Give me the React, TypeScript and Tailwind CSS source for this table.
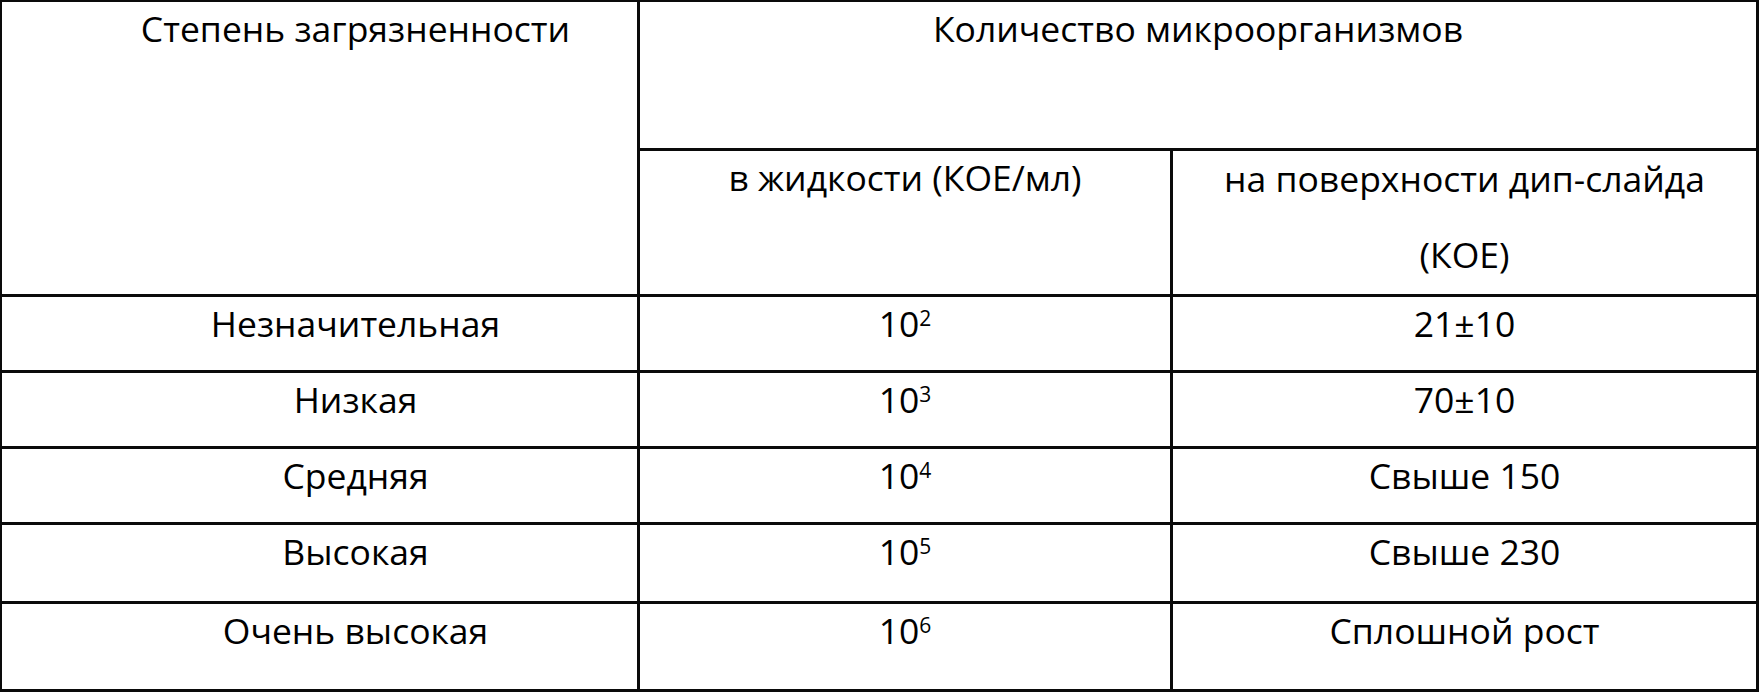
const rows = [
  { level: 'Незначительная', exp: '2', surface: '21±10' },
  { level: 'Низкая', exp: '3', surface: '70±10' },
  { level: 'Средняя', exp: '4', surface: 'Свыше 150' },
  { level: 'Высокая', exp: '5', surface: 'Свыше 230' },
  { level: 'Очень высокая', exp: '6', surface: 'Сплошной рост' },
]

// heights of the body rows, top to bottom
const rowHeights = ['h-[76px]', 'h-[76px]', 'h-[76px]', 'h-[79px]', 'h-[88px]']

const cell = 'border-r-[3px] border-b-[3px] border-[#0a0a0a] text-center leading-[53px]'

export default function App() {
  return (
    <div className="h-[692px] w-[1759px] bg-white font-['Open_Sans','Noto_Sans',sans-serif] text-[35.5px] text-black">
      <div className="grid grid-cols-[638px_533px_586px] grid-rows-[149px_146px] border-l-2 border-t-2 border-[#0a0a0a]">
        <div className={`${cell} row-span-2 pl-[72px]`}>Степень загрязненности</div>
        <div className={`${cell} col-span-2`}>Количество микроорганизмов</div>
        <div className={cell}>в жидкости (КОЕ/мл)</div>
        <div className={`${cell} leading-[76px]`}>
          <div className="-mt-[11.5px]">
            <div className="whitespace-nowrap">на поверхности дип-слайда</div>
            <div>(КОЕ)</div>
          </div>
        </div>

        {rows.map((r, i) => (
          <div key={r.level} className="contents">
            <div className={`${cell} ${rowHeights[i]} pl-[72px]`}>{r.level}</div>
            <div className={`${cell} ${rowHeights[i]}`}>
              10
              <sup className="-top-[11px] text-[21px]">{r.exp}</sup>
            </div>
            <div className={`${cell} ${rowHeights[i]}`}>{r.surface}</div>
          </div>
        ))}
      </div>
    </div>
  )
}
